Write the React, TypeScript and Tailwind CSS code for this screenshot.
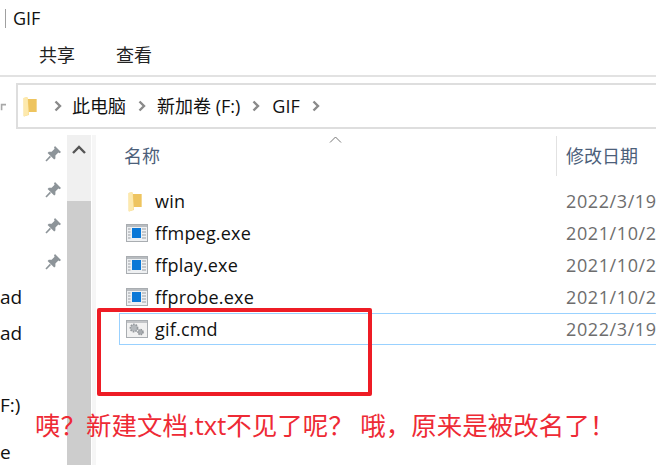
import React from 'react';

const FONT = '"Open Sans", "Noto Sans CJK SC", sans-serif';

const Chevron = () => (
  <svg width="8" height="12" viewBox="0 0 8 12" className="shrink-0">
    <path d="M1.5 1.5 L6 6 L1.5 10.5" fill="none" stroke="#8a8a8a" strokeWidth="2.4" />
  </svg>
);

const FolderIcon = ({ className }: { className: string }) => (
  <svg width="14" height="21" viewBox="0 0 14 21" className={className}>
    <path d="M0.5 2 L4 1 L5 3 L13.5 3 L13.5 16 L6 16 L6 19 L1 20.5 L0.5 20 Z" fill="#f8dc8e" />
    <path d="M5 3 L13.5 3 L13.5 16 L5.5 16 Z" fill="#eec45f" />
    <path d="M0.5 2 L4.5 1 L5.5 16 L5.5 18.5 L1 20.5 Z" fill="#fde9ad" />
  </svg>
);

const ExeIcon = () => (
  <svg width="22" height="18" viewBox="0 0 22 18" className="shrink-0">
    <rect x="0.5" y="0.5" width="21" height="17" fill="#eef0f2" stroke="#a9adb1" />
    <rect x="1" y="1" width="20" height="2" fill="#b8bcc0" />
    <rect x="6" y="4" width="9" height="10" fill="#0a78d7" />
    <path d="M2 5h2.5M2 8h2.5M2 11h2.5M2 14h2.5M16 5h4M16 8h4M16 11h4M16 14h4" stroke="#9a9ea3" />
  </svg>
);

const CmdIcon = () => (
  <svg width="22" height="18" viewBox="0 0 22 18" className="shrink-0">
    <rect x="0.5" y="0.5" width="21" height="17" fill="#f1f1f1" stroke="#a9adb1" />
    <rect x="1" y="1" width="20" height="2" fill="#c3c5c8" />
    <circle cx="8" cy="8" r="3.6" fill="#b4b8bc" stroke="#94989c" strokeWidth="1.6" strokeDasharray="1.6 1" />
    <circle cx="14.5" cy="12" r="2.6" fill="#a8acb0" stroke="#8e9296" strokeWidth="1.4" strokeDasharray="1.4 1" />
  </svg>
);

const PinIcon = () => (
  <svg width="17" height="17" viewBox="0 0 17 17">
    <path d="M10 1 L16 7 L14.6 8.2 L13.4 7.6 L10.4 10.6 L10.4 13.4 L9.2 14.6 L2.6 8 L3.8 6.8 L6.6 6.8 L9.6 3.8 L9 2.4 Z" fill="#8d9499" />
    <path d="M5.4 11.4 L1 16" stroke="#8d9499" strokeWidth="1.6" />
  </svg>
);

const rows = [
  { name: 'win', date: '2022/3/19', icon: <div className="pl-[2px] flex"><FolderIcon className="shrink-0" /></div> },
  { name: 'ffmpeg.exe', date: '2021/10/2', icon: <ExeIcon /> },
  { name: 'ffplay.exe', date: '2021/10/2', icon: <ExeIcon /> },
  { name: 'ffprobe.exe', date: '2021/10/2', icon: <ExeIcon /> },
  { name: 'gif.cmd', date: '2022/3/19', icon: <CmdIcon />, selected: true },
];

export default function App() {
  return (
    <div className="relative w-[656px] h-[465px] overflow-hidden bg-white text-[#111]" style={{ fontFamily: FONT }}>
      {/* title */}
      <div className="h-[36px] flex items-center pl-[5px]">
        <div className="w-px h-[19px] bg-[#a0a0a0]" />
        <span className="ml-[7px] text-[18px] leading-none">GIF</span>
      </div>

      {/* ribbon tabs */}
      <div className="h-[41px] flex items-center pl-[39px] gap-[41px] pb-[1px] border-b-2 border-[#e2e2e2] text-[18px] text-[#222]">
        <span>共享</span>
        <span>查看</span>
      </div>

      {/* address bar */}
      <div className="h-[51px] flex items-start pt-[6px]">
        <div className="w-[16px] h-[45px] flex items-center">
          <svg width="6" height="10" viewBox="0 0 6 10"><path d="M5 1 L1 5 L5 9" fill="none" transform="rotate(45 3 5)" stroke="#a8a8a8" strokeWidth="1.6" /></svg>
        </div>
        <div className="flex-1 h-[46px] border-2 border-r-0 border-[#dedede] flex items-center pl-[5px] text-[18px]">
          <FolderIcon className="shrink-0 mr-[17px]" />
          <Chevron />
          <span className="ml-[10px]">此电脑</span>
          <span className="ml-[12px]"><Chevron /></span>
          <span className="ml-[11px]">新加卷 (F:)</span>
          <span className="ml-[12px]"><Chevron /></span>
          <span className="ml-[12px]">GIF</span>
          <span className="ml-[12px]"><Chevron /></span>
        </div>
      </div>

      {/* main */}
      <div className="flex h-[337px]">
        <div className="w-[67px] shrink-0 pt-[7px] text-[19px]">
          {[0, 1, 2, 3].map((i) => (
            <div key={i} className="h-[36px] flex items-center justify-end pr-[5px]"><PinIcon /></div>
          ))}
          <div className="h-[36px] pt-[1px] flex items-center">ad</div>
          <div className="h-[36px] pt-[1px] flex items-center">ad</div>
          <div className="h-[36px]" />
          <div className="h-[36px] pt-[1px] flex items-center">F:)</div>
          <div className="h-[39px] flex items-end leading-none">e</div>
        </div>

        <div className="w-[24px] shrink-0 mt-[7px] flex flex-col bg-[#cdcdcd]">
          <div className="h-[66px] bg-[#f0f0f0] flex justify-center pt-[10px]">
            <svg width="14" height="9" viewBox="0 0 14 9"><path d="M1 8 L7 2 L13 8" fill="none" stroke="#555" strokeWidth="2.4" /></svg>
          </div>
        </div>

        <div className="w-[4px] shrink-0 ml-[1px] mt-[7px] bg-[#f6f6f6]" />

        <div className="flex-1 min-w-0 overflow-hidden pl-[23px] pt-[8px]">
          <div className="h-[40px] flex relative text-[#4c607a]">
            <span className="w-[437px] shrink-0 pl-[5px] pt-[7px] text-[18px]">名称</span>
            <svg width="14" height="7" viewBox="0 0 14 7" className="absolute left-[210px] top-0"><path d="M1 6.5 L6.5 1 L12 6.5" fill="none" stroke="#777" /></svg>
            <div className="w-px shrink-0 bg-[#e2e2e2]" />
            <span className="pl-[9px] pt-[7px] text-[18px] whitespace-nowrap">修改日期</span>
          </div>
          <div className="pt-[9px]">
            {rows.map((r) => (
              <div key={r.name} className={`h-[32px] flex items-center ${r.selected ? 'border border-r-0 border-[#99d1ff] pl-[6px]' : 'pl-[7px]'}`}>
                <div className="w-[29px] shrink-0 flex">{r.icon}</div>
                <span className="w-[411px] shrink-0 text-[18px] tracking-[0.2px] leading-none text-[#111]">{r.name}</span>
                <span className="text-[18px] tracking-[0.6px] leading-none text-[#6d6d6d] whitespace-nowrap">{r.date}</span>
              </div>
            ))}
          </div>
        </div>
      </div>

      {/* annotation */}
      <div className="absolute left-[97px] top-[308px] w-[275px] h-[88px] border-[4px] border-[#ee1c25] rounded-[2px]" />
      <div className="absolute left-[35px] top-[408px] text-[25.5px] leading-[34px] text-[#ee2a35] whitespace-nowrap">
        {'咦\uFF1F新建文档.txt不见了呢\uFF1F 哦\uFF0C原来是被改名了\uFF01'}
      </div>
    </div>
  );
}
